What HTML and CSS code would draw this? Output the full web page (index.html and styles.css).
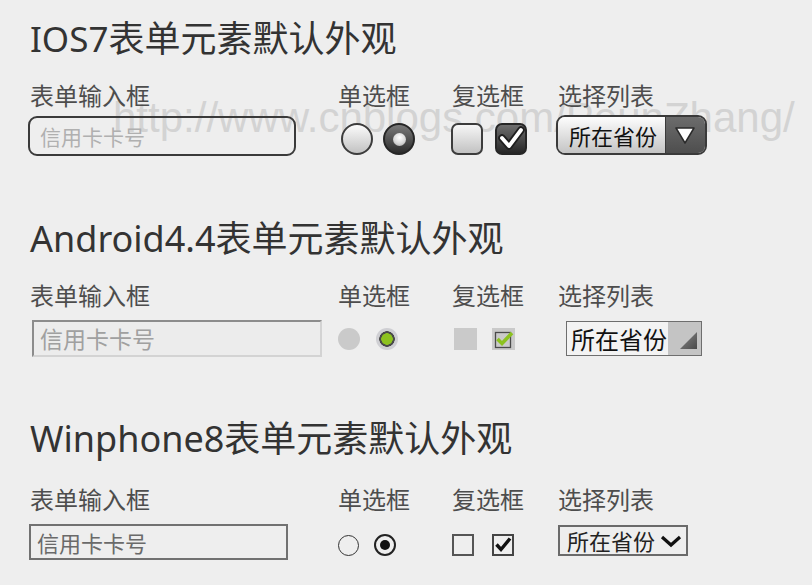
FILE: index.html
```html
<!DOCTYPE html>
<html lang="zh-CN">
<head>
<meta charset="utf-8">
<title>表单元素默认外观</title>
<link rel="stylesheet" href="styles.css">
</head>
<body>
<div class="watermark">http://www.cnblogs.com/PeunZhang/</div>
<div class="page">

  <section class="section ios">
    <h2 class="title"><span class="lat">IOS7</span>表单元素默认外观</h2>
    <div class="grid">
      <div class="field">
        <div class="label">表单输入框</div>
        <div class="controls">
          <div class="ios-input">信用卡卡号</div>
        </div>
      </div>
      <div class="field">
        <div class="label">单选框</div>
        <div class="controls">
          <span class="ios-radio first"></span>
          <span class="ios-radio checked"><span class="dot"></span></span>
        </div>
      </div>
      <div class="field">
        <div class="label">复选框</div>
        <div class="controls">
          <span class="ios-check first"></span>
          <span class="ios-check checked">
            <svg width="28" height="28" viewBox="0 0 28 28"><path d="M5 13 L12 21 L24 5" fill="none" stroke="#1e1e1e" stroke-width="7.5" stroke-linejoin="round" stroke-linecap="round"/><path d="M5 13 L12 21 L24 5" fill="none" stroke="#fff" stroke-width="3.8" stroke-linejoin="round" stroke-linecap="round"/></svg>
          </span>
        </div>
      </div>
      <div class="field">
        <div class="label">选择列表</div>
        <div class="controls">
          <div class="ios-select">
            <span class="ios-select-text">所在省份</span>
            <span class="ios-select-btn"><svg width="39" height="36" viewBox="0 0 39 36"><polygon points="10,11 28,11 19,26" fill="#fff" stroke="#2a2a2a" stroke-width="1.5" stroke-linejoin="round"/></svg></span>
          </div>
        </div>
      </div>
    </div>
  </section>

  <section class="section android">
    <h2 class="title"><span class="lat">Android4.4</span>表单元素默认外观</h2>
    <div class="grid">
      <div class="field">
        <div class="label">表单输入框</div>
        <div class="controls">
          <div class="and-input">信用卡卡号</div>
        </div>
      </div>
      <div class="field">
        <div class="label">单选框</div>
        <div class="controls">
          <span class="and-radio"></span>
          <span class="and-radio checked"></span>
        </div>
      </div>
      <div class="field">
        <div class="label">复选框</div>
        <div class="controls">
          <span class="and-check first"></span>
          <span class="and-check checked">
            <svg width="23" height="22" viewBox="0 0 23 22"><rect x="3.5" y="4.5" width="15" height="15" fill="none" stroke="#4a4a4a" stroke-width="1.3"/><path d="M5.5 11 L10 15.5 L20 5" fill="none" stroke="#8cc21f" stroke-width="3.6" stroke-linejoin="miter"/></svg>
          </span>
        </div>
      </div>
      <div class="field">
        <div class="label">选择列表</div>
        <div class="controls">
          <div class="and-select">
            <span class="and-select-text">所在省份</span>
            <span class="and-select-btn"><svg width="33" height="33" viewBox="0 0 33 33"><defs><linearGradient id="tg" x1="0" y1="0" x2="1" y2="1"><stop offset="0" stop-color="#8a8a8a"/><stop offset="1" stop-color="#4a4a4a"/></linearGradient></defs><polygon points="12,27 29,27 29,10" fill="url(#tg)"/></svg></span>
          </div>
        </div>
      </div>
    </div>
  </section>

  <section class="section wp">
    <h2 class="title"><span class="lat">Winphone8</span>表单元素默认外观</h2>
    <div class="grid">
      <div class="field">
        <div class="label">表单输入框</div>
        <div class="controls">
          <div class="wp-input">信用卡卡号</div>
        </div>
      </div>
      <div class="field">
        <div class="label">单选框</div>
        <div class="controls">
          <span class="wp-radio"></span>
          <span class="wp-radio checked"><span class="dot"></span></span>
        </div>
      </div>
      <div class="field">
        <div class="label">复选框</div>
        <div class="controls">
          <span class="wp-check"></span>
          <span class="wp-check checked">
            <svg width="18" height="18" viewBox="0 0 18 18"><path d="M2.5 8.5 L7 13.5 L16 2.5" fill="none" stroke="#111" stroke-width="3.4" stroke-linejoin="miter"/></svg>
          </span>
        </div>
      </div>
      <div class="field">
        <div class="label">选择列表</div>
        <div class="controls">
          <div class="wp-select">
            <span class="wp-select-text">所在省份</span>
            <svg class="chev" width="22" height="14" viewBox="0 0 22 14"><polyline points="2,3 11,11 20,3" fill="none" stroke="#111" stroke-width="3.2"/></svg>
          </div>
        </div>
      </div>
    </div>
  </section>

</div>
</body>
</html>
```

FILE: styles.css
```css
html, body {
  margin: 0;
  padding: 0;
}

body {
  background: #eeeeee;
  font-family: "Noto Sans CJK SC", sans-serif;
  color: #333333;
  position: relative;
  min-height: 585px;
}

.watermark {
  position: absolute;
  z-index: -1;
  left: 113px;
  top: 97px;
  font-family: "Liberation Sans", Arial, sans-serif;
  font-size: 42px;
  line-height: 42px;
  color: #d3d3d3;
  white-space: nowrap;
}

.page {
  padding-left: 30px;
}

.section {
  height: 200px;
  padding-top: 16px;
  box-sizing: border-box;
}

.title {
  margin: 0;
  font-family: "Noto Sans CJK SC", sans-serif;
  font-size: 36px;
  font-weight: normal;
  line-height: 40px;
  height: 40px;
  color: #333333;
  white-space: nowrap;
}

.title .lat {
  font-family: "Noto Sans", sans-serif;
  font-size: 36px;
  line-height: 1;
}

.ios .title .lat { font-size: 35px; }

.grid {
  display: grid;
  grid-template-columns: 308px 114px 106px auto;
  margin-top: 24px;
}

.label {
  font-size: 24px;
  line-height: 30px;
  color: #4d4d4d;
}

.controls {
  display: flex;
  align-items: center;
  height: 44px;
  margin-top: 4px;
}

.android .controls { margin-top: 6px; }
.wp .grid { margin-top: 28px; }
.wp .controls { margin-top: 6px; }

/* ---------- iOS 7 ---------- */
.ios-input {
  margin-left: -2px;
  width: 268px;
  height: 40px;
  box-sizing: border-box;
  border: 2px solid #3a3a3a;
  border-radius: 9px;
  padding-left: 10px;
  font-size: 21px;
  color: #b0b0b0;
  display: flex;
  align-items: center;
}

.ios-radio {
  width: 32px;
  height: 32px;
  box-sizing: border-box;
  border-radius: 50%;
  border: 2px solid #3c3c3c;
  background: linear-gradient(#fbfbfb, #c2c2c2);
  margin-top: 6px;
  margin-left: 10px;
  display: flex;
  align-items: center;
  justify-content: center;
}
.ios-radio.first { margin-left: 3px; }
.ios-radio.checked {
  border-color: #262626;
  background: linear-gradient(#7a7a7a, #2c2c2c);
}
.ios-radio .dot {
  width: 13px;
  height: 13px;
  border-radius: 50%;
  background: radial-gradient(circle at 50% 35%, #ffffff, #d8d8d8 55%, #9a9a9a);
}

.ios-check {
  width: 32px;
  height: 32px;
  box-sizing: border-box;
  border-radius: 7px;
  border: 2px solid #3c3c3c;
  background: linear-gradient(#f6f6f6, #c2c2c2);
  margin-top: 6px;
  margin-left: 12px;
}
.ios-check.first { margin-left: -1px; }
.ios-check.checked {
  border-color: #262626;
  background: linear-gradient(#6e6e6e, #262626);
}
.ios-check svg { display: block; }

.ios-select {
  margin-left: -2px;
  width: 151px;
  height: 40px;
  box-sizing: border-box;
  border: 2px solid #3a3a3a;
  border-radius: 9px;
  overflow: hidden;
  display: flex;
  margin-top: -2px;
}
.ios-select-text {
  flex: 1;
  background: linear-gradient(#fdfdfd, #c4c4c4);
  font-size: 22px;
  line-height: 36px;
  color: #111111;
  padding-left: 11px;
}
.ios-select-btn {
  width: 39px;
  border-left: 1px solid #3a3a3a;
  background: linear-gradient(#6c6c6c, #4e4e4e);
}
.ios-select-btn svg { display: block; }

/* ---------- Android 4.4 ---------- */
.and-input {
  margin-left: 2px;
  width: 290px;
  height: 37px;
  box-sizing: border-box;
  border: 2px solid;
  border-color: #8c8c8c #d3d3d3 #d3d3d3 #8c8c8c;
  background: #ececec;
  padding-left: 6px;
  font-size: 23px;
  color: #a0a0a0;
  display: flex;
  align-items: center;
}

.and-radio {
  width: 22px;
  height: 22px;
  border-radius: 50%;
  background: #cacaca;
  margin-top: 2px;
}
.and-radio.checked {
  margin-left: 16px;
  background: radial-gradient(circle, #8dc21f 0 5.5px, #4a4a4a 6px 7.5px, #cfcfd3 8px 11px);
}

.and-check {
  width: 23px;
  height: 22px;
  background: #cacaca;
  margin-top: 2px;
  margin-left: 15px;
}
.and-check.first { margin-left: 2px; }
.and-check svg { display: block; }

.and-select {
  margin-left: 8px;
  width: 136px;
  height: 35px;
  box-sizing: border-box;
  border: 1px solid #6e6e6e;
  display: flex;
  background: #f3f3f3;
}
.and-select-text {
  flex: 1;
  font-size: 24px;
  line-height: 33px;
  color: #111111;
  padding-left: 4px;
}
.and-select-btn {
  width: 33px;
  background: #c4c4c4;
}
.and-select-btn svg { display: block; }

/* ---------- Windows Phone 8 ---------- */
.wp-input {
  margin-left: -1px;
  width: 259px;
  height: 36px;
  box-sizing: border-box;
  border: 2px solid #717171;
  padding-left: 6px;
  font-size: 22px;
  color: #6a6a6a;
  display: flex;
  align-items: center;
}

.wp-radio {
  width: 21px;
  height: 21px;
  box-sizing: border-box;
  border-radius: 50%;
  border: 1.5px solid #333333;
  margin-top: 6px;
  display: flex;
  align-items: center;
  justify-content: center;
}
.wp-radio.checked {
  width: 22px;
  height: 22px;
  border: 2px solid #222222;
  margin-left: 15px;
}
.wp-radio .dot {
  width: 10px;
  height: 10px;
  border-radius: 50%;
  background: #111111;
}

.wp-check {
  width: 22px;
  height: 22px;
  box-sizing: border-box;
  border: 2px solid #555555;
  margin-top: 5px;
}
.wp-check.checked { margin-left: 18px; border-color: #444444; }
.wp-check svg { display: block; }

.wp-select {
  width: 130px;
  height: 31px;
  box-sizing: border-box;
  border: 2px solid #6a6a6a;
  display: flex;
  align-items: center;
  margin-top: -3px;
}
.wp-select-text {
  flex: 1;
  font-size: 22px;
  line-height: 27px;
  color: #222222;
  padding-left: 7px;
}
.wp-select .chev {
  display: block;
  margin-right: 4px;
}
```
